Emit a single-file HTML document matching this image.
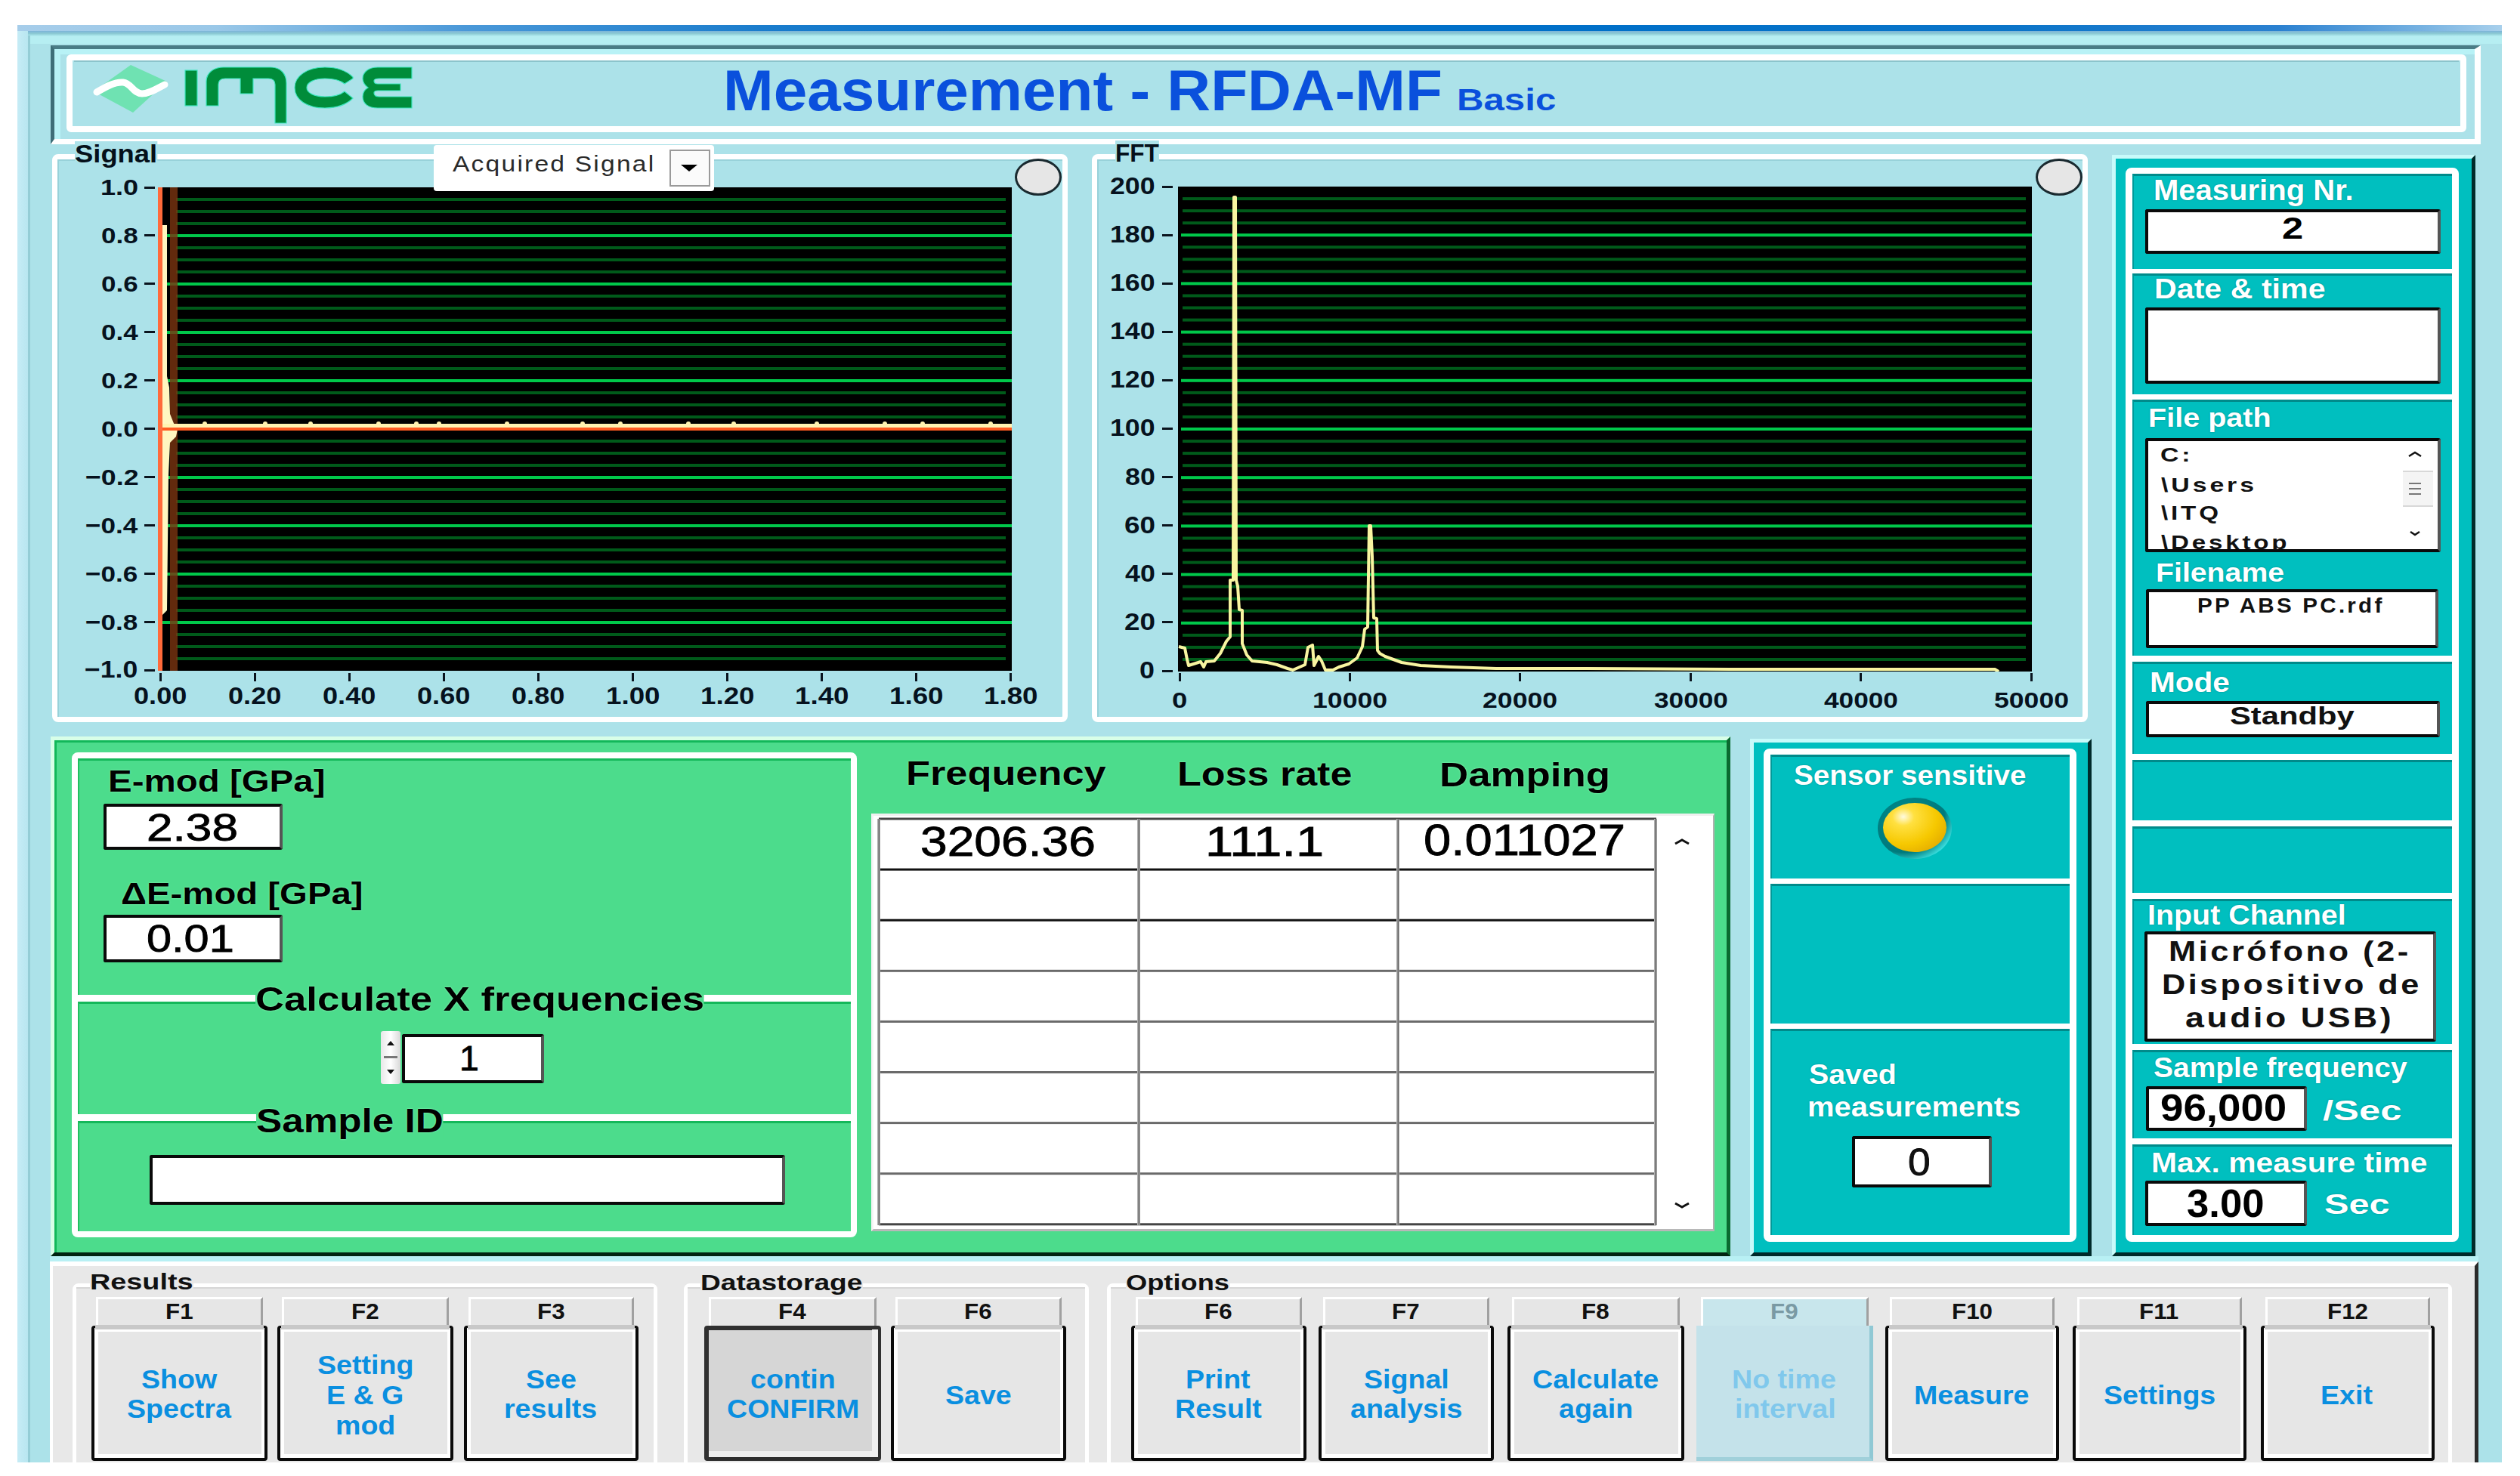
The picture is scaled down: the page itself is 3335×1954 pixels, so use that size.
<!DOCTYPE html>
<html><head><meta charset="utf-8"><style>
html,body{margin:0;padding:0;}
body{width:3335px;height:1954px;position:relative;overflow:hidden;background:#fff;font-family:"Liberation Sans",sans-serif;}
.a{position:absolute;}
.t{position:absolute;white-space:nowrap;line-height:1;transform-origin:0 0;font-family:"Liberation Sans",sans-serif;}
</style></head><body>
<div class="a" style="left:23px;top:33px;width:3288px;height:1903px;background:#ace2e9;"></div>
<div class="a" style="left:23px;top:33px;width:3288px;height:8px;background:linear-gradient(90deg,#a6cdea 0%,#9ac8e8 8%,#4a98d8 18%,#1a7ccc 30%,#0070c8 45%,#0070c8 65%,#0a74c8 80%,#2a80d0 91%,#7ab4e2 97%,#a8d0ec 100%);"></div>
<div class="a" style="left:23px;top:41px;width:3288px;height:7px;background:linear-gradient(180deg,#7cb4d8,#8ccad4 50%,#b4eef2);"></div>
<div class="a" style="left:40px;top:48px;width:3271px;height:10px;background:#b6eef2;"></div>
<div class="a" style="left:23px;top:41px;width:14px;height:1895px;background:linear-gradient(90deg,#c6ecf6,#b8e6f0);"></div>
<div class="a" style="left:37px;top:47px;width:3px;height:1889px;background:#94cdd6;"></div>
<div class="a" style="left:67px;top:60px;width:3216px;height:131px;background:#ace2e9;border-top:5px solid #4a7c86;border-left:5px solid #3e6e78;border-right:8px solid #ffffff;border-bottom:7px solid #ffffff;box-sizing:border-box;"></div>
<div class="a" style="left:72px;top:65px;width:3203px;height:7px;background:#b8f2f6;"></div>
<div class="a" style="left:72px;top:65px;width:8px;height:119px;background:#b8f2f6;"></div>
<div class="a" style="left:88px;top:72px;width:3176px;height:103px;background:#ace2e9;border:8px solid #fff;border-radius:6px;box-sizing:border-box;"></div>
<div class="a" style="left:98px;top:80px;width:3156px;height:2px;background:#8cc4cc;"></div>
<svg class="a" style="left:100px;top:70px" width="460" height="110" viewBox="100 70 460 110">
<polygon points="124,121 173,86 221,108 176,149" fill="#6fe2b2"/>
<path d="M128,122 C140,115 152,108 163,109 C174,110 176,124 188,124 C198,124 208,117 218,112" stroke="#ffffff" stroke-width="9" fill="none" stroke-linecap="round"/>
<g fill="#008c3a" stroke="#3fe6c0" stroke-width="1.2">
<rect x="245" y="93" width="16" height="47"/>
<path d="M273,140 L273,108 C273,96 283,89 296,89 L358,89 C372,89 379,98 379,110 L379,163 L364,163 L364,112 C364,106 360,104 355,104 L335,104 L335,124 L318,124 L318,104 L298,104 C292,104 289,107 289,112 L289,140 Z"/>
<path d="M467,104 L467,102 C458,93 446,89 430,89 C406,89 390,101 390,116 C390,132 406,143 430,143 C446,143 458,139 467,130 L456,121 C450,126 441,128 430,128 C416,128 406,123 406,116 C406,109 416,104 430,104 C441,104 450,106 456,111 Z"/>
<path d="M545,89 L500,89 C487,89 480,96 480,104 C480,109 483,113 487,116 C482,119 480,123 480,128 C480,137 487,143 500,143 L545,143 L545,128 L502,128 C497,128 495,126 495,123 C495,121 497,120 500,120 L530,120 L530,111 L500,111 C497,111 495,110 495,107 C495,105 497,104 502,104 L545,104 Z"/>
</g></svg>
<div class="a" style="left:69px;top:204px;width:1344px;height:752px;border:7px solid #fff;border-radius:8px;box-sizing:border-box;"></div>
<div class="a" style="left:76px;top:211px;width:1330px;height:2px;background:#98d2da;"></div>
<div class="a" style="left:76px;top:211px;width:2px;height:738px;background:#98d2da;"></div>
<div class="a" style="left:1445px;top:204px;width:1318px;height:752px;border:7px solid #fff;border-radius:8px;box-sizing:border-box;"></div>
<div class="a" style="left:1452px;top:211px;width:1304px;height:2px;background:#98d2da;"></div>
<div class="a" style="left:1452px;top:211px;width:2px;height:738px;background:#98d2da;"></div>
<svg class="a" style="left:211px;top:248px" width="1128" height="640"><rect width="1128" height="640" fill="#000"/><rect x="22" y="14.0" width="1098" height="4" fill="#005a1a"/><rect x="22" y="30.0" width="1098" height="4" fill="#005a1a"/><rect x="22" y="46.0" width="1098" height="4" fill="#005a1a"/><rect x="4" y="62.0" width="1124" height="4" fill="#00c84a"/><rect x="22" y="78.0" width="1098" height="4" fill="#005a1a"/><rect x="22" y="94.0" width="1098" height="4" fill="#005a1a"/><rect x="22" y="110.0" width="1098" height="4" fill="#005a1a"/><rect x="4" y="126.0" width="1124" height="4" fill="#00c84a"/><rect x="22" y="142.0" width="1098" height="4" fill="#005a1a"/><rect x="22" y="158.0" width="1098" height="4" fill="#005a1a"/><rect x="22" y="174.0" width="1098" height="4" fill="#005a1a"/><rect x="4" y="190.0" width="1124" height="4" fill="#00c84a"/><rect x="22" y="206.0" width="1098" height="4" fill="#005a1a"/><rect x="22" y="222.0" width="1098" height="4" fill="#005a1a"/><rect x="22" y="238.0" width="1098" height="4" fill="#005a1a"/><rect x="4" y="254.0" width="1124" height="4" fill="#00c84a"/><rect x="22" y="270.0" width="1098" height="4" fill="#005a1a"/><rect x="22" y="286.0" width="1098" height="4" fill="#005a1a"/><rect x="22" y="302.0" width="1098" height="4" fill="#005a1a"/><rect x="4" y="318.0" width="1124" height="4" fill="#00c84a"/><rect x="22" y="334.0" width="1098" height="4" fill="#005a1a"/><rect x="22" y="350.0" width="1098" height="4" fill="#005a1a"/><rect x="22" y="366.0" width="1098" height="4" fill="#005a1a"/><rect x="4" y="382.0" width="1124" height="4" fill="#00c84a"/><rect x="22" y="398.0" width="1098" height="4" fill="#005a1a"/><rect x="22" y="414.0" width="1098" height="4" fill="#005a1a"/><rect x="22" y="430.0" width="1098" height="4" fill="#005a1a"/><rect x="4" y="446.0" width="1124" height="4" fill="#00c84a"/><rect x="22" y="462.0" width="1098" height="4" fill="#005a1a"/><rect x="22" y="478.0" width="1098" height="4" fill="#005a1a"/><rect x="22" y="494.0" width="1098" height="4" fill="#005a1a"/><rect x="4" y="510.0" width="1124" height="4" fill="#00c84a"/><rect x="22" y="526.0" width="1098" height="4" fill="#005a1a"/><rect x="22" y="542.0" width="1098" height="4" fill="#005a1a"/><rect x="22" y="558.0" width="1098" height="4" fill="#005a1a"/><rect x="4" y="574.0" width="1124" height="4" fill="#00c84a"/><rect x="22" y="590.0" width="1098" height="4" fill="#005a1a"/><rect x="22" y="606.0" width="1098" height="4" fill="#005a1a"/><rect x="22" y="622.0" width="1098" height="4" fill="#005a1a"/><rect x="14" y="0" width="10" height="640" fill="#7a3410" opacity="0.8"/><path d="M4,50 L10,50 L10,250 L13,265 L14,300 L20,315 L24,320 L22,330 L14,338 L12,380 L10,560 L4,566 Z" fill="#fff6c0"/><rect x="4" y="313" width="1124" height="5" fill="#fff2b0"/><rect x="0" y="318" width="1128" height="4" fill="#ff5a20"/><circle cx="60" cy="313" r="3" fill="#fff2b0"/><circle cx="140" cy="313" r="3" fill="#fff2b0"/><circle cx="200" cy="313" r="3" fill="#fff2b0"/><circle cx="290" cy="313" r="3" fill="#fff2b0"/><circle cx="340" cy="313" r="3" fill="#fff2b0"/><circle cx="370" cy="313" r="3" fill="#fff2b0"/><circle cx="460" cy="313" r="3" fill="#fff2b0"/><circle cx="560" cy="313" r="3" fill="#fff2b0"/><circle cx="610" cy="313" r="3" fill="#fff2b0"/><circle cx="700" cy="313" r="3" fill="#fff2b0"/><circle cx="760" cy="313" r="3" fill="#fff2b0"/><circle cx="870" cy="313" r="3" fill="#fff2b0"/><circle cx="960" cy="313" r="3" fill="#fff2b0"/><circle cx="1010" cy="313" r="3" fill="#fff2b0"/><circle cx="1100" cy="313" r="3" fill="#fff2b0"/></svg>
<div class="a" style="left:209px;top:248px;width:6px;height:640px;background:#ff6a3a;"></div>
<svg class="a" style="left:1559px;top:247px" width="1130" height="642"><rect width="1130" height="642" fill="#000"/><rect x="6" y="14.1" width="1116" height="4" fill="#005a1a"/><rect x="6" y="30.1" width="1116" height="4" fill="#005a1a"/><rect x="6" y="46.2" width="1116" height="4" fill="#005a1a"/><rect x="4" y="62.2" width="1126" height="4" fill="#00c84a"/><rect x="6" y="78.2" width="1116" height="4" fill="#005a1a"/><rect x="6" y="94.3" width="1116" height="4" fill="#005a1a"/><rect x="6" y="110.4" width="1116" height="4" fill="#005a1a"/><rect x="4" y="126.4" width="1126" height="4" fill="#00c84a"/><rect x="6" y="142.5" width="1116" height="4" fill="#005a1a"/><rect x="6" y="158.5" width="1116" height="4" fill="#005a1a"/><rect x="6" y="174.6" width="1116" height="4" fill="#005a1a"/><rect x="4" y="190.6" width="1126" height="4" fill="#00c84a"/><rect x="6" y="206.7" width="1116" height="4" fill="#005a1a"/><rect x="6" y="222.7" width="1116" height="4" fill="#005a1a"/><rect x="6" y="238.8" width="1116" height="4" fill="#005a1a"/><rect x="4" y="254.8" width="1126" height="4" fill="#00c84a"/><rect x="6" y="270.9" width="1116" height="4" fill="#005a1a"/><rect x="6" y="286.9" width="1116" height="4" fill="#005a1a"/><rect x="6" y="302.9" width="1116" height="4" fill="#005a1a"/><rect x="4" y="319.0" width="1126" height="4" fill="#00c84a"/><rect x="6" y="335.1" width="1116" height="4" fill="#005a1a"/><rect x="6" y="351.1" width="1116" height="4" fill="#005a1a"/><rect x="6" y="367.2" width="1116" height="4" fill="#005a1a"/><rect x="4" y="383.2" width="1126" height="4" fill="#00c84a"/><rect x="6" y="399.2" width="1116" height="4" fill="#005a1a"/><rect x="6" y="415.3" width="1116" height="4" fill="#005a1a"/><rect x="6" y="431.4" width="1116" height="4" fill="#005a1a"/><rect x="4" y="447.4" width="1126" height="4" fill="#00c84a"/><rect x="6" y="463.5" width="1116" height="4" fill="#005a1a"/><rect x="6" y="479.5" width="1116" height="4" fill="#005a1a"/><rect x="6" y="495.6" width="1116" height="4" fill="#005a1a"/><rect x="4" y="511.6" width="1126" height="4" fill="#00c84a"/><rect x="6" y="527.6" width="1116" height="4" fill="#005a1a"/><rect x="6" y="543.7" width="1116" height="4" fill="#005a1a"/><rect x="6" y="559.8" width="1116" height="4" fill="#005a1a"/><rect x="4" y="575.8" width="1126" height="4" fill="#00c84a"/><rect x="6" y="591.9" width="1116" height="4" fill="#005a1a"/><rect x="6" y="607.9" width="1116" height="4" fill="#005a1a"/><rect x="6" y="624.0" width="1116" height="4" fill="#005a1a"/><polyline points="1,609 9,611 12,626 14,634 30,629 34,636 37,629 48,628 56,618 64,602 69,596 69,521 73,521 74,14 76,14 77,521 79,529 81,560 85,561 85,605 91,620 98,628 118,630 131,633 145,638 152,640 168,633 172,610 178,607 180,634 186,622 190,628 195,640 205,640 213,636 226,632 237,624 244,609 247,586 251,583 253,449 255,449 257,490 259,571 263,572 264,614 267,618 274,622 296,630 321,634 361,636 421,638 541,638 741,639 941,639 1081,639 1086,642" fill="none" stroke="#f8f4a0" stroke-width="4" stroke-linejoin="round"/></svg>
<div class="a" style="left:191px;top:246.5px;width:14px;height:3px;background:#0a141e"></div><div class="a" style="left:1538px;top:245.5px;width:14px;height:3px;background:#0a141e"></div><div class="a" style="left:191px;top:310.4px;width:14px;height:3px;background:#0a141e"></div><div class="a" style="left:1538px;top:309.6px;width:14px;height:3px;background:#0a141e"></div><div class="a" style="left:191px;top:374.3px;width:14px;height:3px;background:#0a141e"></div><div class="a" style="left:1538px;top:373.7px;width:14px;height:3px;background:#0a141e"></div><div class="a" style="left:191px;top:438.2px;width:14px;height:3px;background:#0a141e"></div><div class="a" style="left:1538px;top:437.8px;width:14px;height:3px;background:#0a141e"></div><div class="a" style="left:191px;top:502.1px;width:14px;height:3px;background:#0a141e"></div><div class="a" style="left:1538px;top:501.9px;width:14px;height:3px;background:#0a141e"></div><div class="a" style="left:191px;top:566.0px;width:14px;height:3px;background:#0a141e"></div><div class="a" style="left:1538px;top:566.0px;width:14px;height:3px;background:#0a141e"></div><div class="a" style="left:191px;top:629.9px;width:14px;height:3px;background:#0a141e"></div><div class="a" style="left:1538px;top:630.1px;width:14px;height:3px;background:#0a141e"></div><div class="a" style="left:191px;top:693.8px;width:14px;height:3px;background:#0a141e"></div><div class="a" style="left:1538px;top:694.2px;width:14px;height:3px;background:#0a141e"></div><div class="a" style="left:191px;top:757.7px;width:14px;height:3px;background:#0a141e"></div><div class="a" style="left:1538px;top:758.3px;width:14px;height:3px;background:#0a141e"></div><div class="a" style="left:191px;top:821.6px;width:14px;height:3px;background:#0a141e"></div><div class="a" style="left:1538px;top:822.4px;width:14px;height:3px;background:#0a141e"></div><div class="a" style="left:191px;top:885.5px;width:14px;height:3px;background:#0a141e"></div><div class="a" style="left:1538px;top:886.5px;width:14px;height:3px;background:#0a141e"></div><div class="a" style="left:210.5px;top:891px;width:3px;height:11px;background:#0a141e"></div><div class="a" style="left:335.6px;top:891px;width:3px;height:11px;background:#0a141e"></div><div class="a" style="left:460.7px;top:891px;width:3px;height:11px;background:#0a141e"></div><div class="a" style="left:585.8px;top:891px;width:3px;height:11px;background:#0a141e"></div><div class="a" style="left:710.9px;top:891px;width:3px;height:11px;background:#0a141e"></div><div class="a" style="left:836.0px;top:891px;width:3px;height:11px;background:#0a141e"></div><div class="a" style="left:961.1px;top:891px;width:3px;height:11px;background:#0a141e"></div><div class="a" style="left:1086.2px;top:891px;width:3px;height:11px;background:#0a141e"></div><div class="a" style="left:1211.3px;top:891px;width:3px;height:11px;background:#0a141e"></div><div class="a" style="left:1336.4px;top:891px;width:3px;height:11px;background:#0a141e"></div><div class="a" style="left:1559.5px;top:891px;width:3px;height:11px;background:#0a141e"></div><div class="a" style="left:1784.9px;top:891px;width:3px;height:11px;background:#0a141e"></div><div class="a" style="left:2010.3px;top:891px;width:3px;height:11px;background:#0a141e"></div><div class="a" style="left:2235.7px;top:891px;width:3px;height:11px;background:#0a141e"></div><div class="a" style="left:2461.1px;top:891px;width:3px;height:11px;background:#0a141e"></div><div class="a" style="left:2686.5px;top:891px;width:3px;height:11px;background:#0a141e"></div>
<div class="a" style="left:1343px;top:210px;width:62px;height:49px;border-radius:50%;background:#e6e6e6;border:3px solid #1a2a30;box-sizing:border-box;"></div>
<div class="a" style="left:2694px;top:210px;width:62px;height:49px;border-radius:50%;background:#e6e6e6;border:3px solid #1a2a30;box-sizing:border-box;"></div>
<div class="a" style="left:574px;top:192px;width:371px;height:61px;background:#fff;border-radius:4px;"></div>
<div class="a" style="left:886px;top:198px;width:54px;height:49px;background:#fbfbfb;border:2px solid #9a9a9a;box-sizing:border-box;"></div>
<svg class="a" style="left:900px;top:215px" width="26" height="14"><polygon points="1,3 23,3 12,12" fill="#000"/></svg>
<div class="a" style="left:2795px;top:205px;width:481px;height:1458px;background:#00bfbf;border-top:5px solid #c8fafa;border-left:5px solid #c8fafa;border-right:5px solid #002a2a;border-bottom:5px solid #002a2a;box-sizing:border-box;"></div>
<div class="a" style="left:2813px;top:222px;width:441px;height:1422px;border:9px solid #fff;border-radius:8px;box-sizing:border-box;"></div>
<div class="a" style="left:2822px;top:230px;width:423px;height:126px;background:#00bfbf;border-top:3px solid #008a8a;border-left:2px solid #009a9a;box-sizing:border-box;"></div>
<div class="a" style="left:2822px;top:362px;width:423px;height:160px;background:#00bfbf;border-top:3px solid #008a8a;border-left:2px solid #009a9a;box-sizing:border-box;"></div>
<div class="a" style="left:2822px;top:529px;width:423px;height:339px;background:#00bfbf;border-top:3px solid #008a8a;border-left:2px solid #009a9a;box-sizing:border-box;"></div>
<div class="a" style="left:2822px;top:876px;width:423px;height:122px;background:#00bfbf;border-top:3px solid #008a8a;border-left:2px solid #009a9a;box-sizing:border-box;"></div>
<div class="a" style="left:2822px;top:1006px;width:423px;height:80px;background:#00bfbf;border-top:3px solid #008a8a;border-left:2px solid #009a9a;box-sizing:border-box;"></div>
<div class="a" style="left:2822px;top:1094px;width:423px;height:88px;background:#00bfbf;border-top:3px solid #008a8a;border-left:2px solid #009a9a;box-sizing:border-box;"></div>
<div class="a" style="left:2822px;top:1190px;width:423px;height:192px;background:#00bfbf;border-top:3px solid #008a8a;border-left:2px solid #009a9a;box-sizing:border-box;"></div>
<div class="a" style="left:2822px;top:1390px;width:423px;height:117px;background:#00bfbf;border-top:3px solid #008a8a;border-left:2px solid #009a9a;box-sizing:border-box;"></div>
<div class="a" style="left:2822px;top:1515px;width:423px;height:120px;background:#00bfbf;border-top:3px solid #008a8a;border-left:2px solid #009a9a;box-sizing:border-box;"></div>
<div class="a" style="left:2813px;top:356px;width:441px;height:6px;background:#fff;"></div>
<div class="a" style="left:2813px;top:522px;width:441px;height:7px;background:#fff;"></div>
<div class="a" style="left:2813px;top:868px;width:441px;height:8px;background:#fff;"></div>
<div class="a" style="left:2813px;top:998px;width:441px;height:8px;background:#fff;"></div>
<div class="a" style="left:2813px;top:1086px;width:441px;height:8px;background:#fff;"></div>
<div class="a" style="left:2813px;top:1182px;width:441px;height:8px;background:#fff;"></div>
<div class="a" style="left:2813px;top:1382px;width:441px;height:8px;background:#fff;"></div>
<div class="a" style="left:2813px;top:1507px;width:441px;height:8px;background:#fff;"></div>
<div class="a" style="left:2839px;top:277px;width:391px;height:59px;background:#fff;border:4px solid #0a0a0a;border-right-color:#555;border-radius:3px;box-sizing:border-box;"></div>
<div class="a" style="left:2839px;top:407px;width:391px;height:101px;background:#fff;border:4px solid #0a0a0a;border-right-color:#555;border-radius:3px;box-sizing:border-box;"></div>
<div class="a" style="left:2839px;top:580px;width:391px;height:151px;background:#fff;border:4px solid #0a0a0a;border-right-color:#555;border-radius:3px;box-sizing:border-box;"></div>
<svg class="a" style="left:3180px;top:592px" width="40" height="130"><path d="M8,12 L16,7 L24,12" stroke="#111" stroke-width="2.5" fill="none"/><rect x="-14" y="32" width="56" height="46" rx="3" fill="#f4f4f4" stroke="#d8d8d8" stroke-width="2"/><path d="M8,48 H24 M8,55 H24 M8,62 H24" stroke="#777" stroke-width="2"/><path d="M10,112 L16,116 L22,112" stroke="#111" stroke-width="2.5" fill="none"/></svg>
<div class="a" style="left:2840px;top:780px;width:387px;height:78px;background:#fff;border:4px solid #0a0a0a;border-right-color:#555;border-radius:3px;box-sizing:border-box;"></div>
<div class="a" style="left:2840px;top:928px;width:389px;height:48px;background:#fff;border:4px solid #0a0a0a;border-right-color:#555;border-radius:3px;box-sizing:border-box;"></div>
<div class="a" style="left:2838px;top:1233px;width:386px;height:146px;background:#fff;border:4px solid #0a0a0a;border-right-color:#555;border-radius:3px;box-sizing:border-box;"></div>
<div class="a" style="left:2840px;top:1438px;width:213px;height:59px;background:#fff;border:4px solid #0a0a0a;border-right-color:#555;border-radius:3px;box-sizing:border-box;"></div>
<div class="a" style="left:2839px;top:1563px;width:214px;height:60px;background:#fff;border:4px solid #0a0a0a;border-right-color:#555;border-radius:3px;box-sizing:border-box;"></div>
<div class="a" style="left:67px;top:975px;width:2223px;height:688px;background:#4cdc8c;border-top:5px solid #d8ffe8;border-left:5px solid #d8ffe8;border-right:5px solid #0a6a30;border-bottom:5px solid #002410;box-sizing:border-box;"></div>
<div class="a" style="left:72px;top:980px;width:2213px;height:3px;background:#12b85a;"></div>
<div class="a" style="left:72px;top:980px;width:3px;height:678px;background:#12b85a;"></div>
<div class="a" style="left:95px;top:996px;width:1039px;height:642px;border:8px solid #fff;border-radius:8px;box-sizing:border-box;"></div>
<div class="a" style="left:103px;top:1004px;width:1023px;height:313px;background:#4cdc8c;border-top:3px solid #14b85a;border-left:2px solid #20c060;box-sizing:border-box;"></div>
<div class="a" style="left:103px;top:1326px;width:1023px;height:149px;background:#4cdc8c;border-top:3px solid #14b85a;border-left:2px solid #20c060;box-sizing:border-box;"></div>
<div class="a" style="left:103px;top:1484px;width:1023px;height:146px;background:#4cdc8c;border-top:3px solid #14b85a;border-left:2px solid #20c060;box-sizing:border-box;"></div>
<div class="a" style="left:95px;top:1317px;width:1039px;height:9px;background:#fff;"></div>
<div class="a" style="left:95px;top:1475px;width:1039px;height:9px;background:#fff;"></div>
<div class="a" style="left:137px;top:1064px;width:237px;height:61px;background:#fff;border:4px solid #0a0a0a;border-right-color:#555;border-radius:3px;box-sizing:border-box;"></div>
<div class="a" style="left:137px;top:1211px;width:237px;height:63px;background:#fff;border:4px solid #0a0a0a;border-right-color:#555;border-radius:3px;box-sizing:border-box;"></div>
<div class="a" style="left:532px;top:1369px;width:188px;height:65px;background:#fff;border:4px solid #0a0a0a;border-right-color:#555;border-radius:3px;box-sizing:border-box;"></div>
<div class="a" style="left:198px;top:1529px;width:841px;height:66px;background:#fff;border:4px solid #0a0a0a;border-right-color:#555;border-radius:3px;box-sizing:border-box;"></div>
<div class="a" style="left:504px;top:1365px;width:26px;height:70px;background:linear-gradient(90deg,#e8e8e8,#ffffff,#d8d8d8);border-radius:3px"></div>
<svg class="a" style="left:504px;top:1365px" width="26" height="70"><path d="M8,19 L13,13 L18,19 Z" fill="#111"/><path d="M8,51 L13,57 L18,51 Z" fill="#111"/><rect x="4" y="33" width="18" height="3" fill="#777"/></svg>
<div class="a" style="left:1153px;top:1077px;width:1116px;height:553px;background:#fff;border-top:3px solid #f0f0f0;border-left:3px solid #f4f4f4;border-right:2px solid #b0b0b0;border-bottom:3px solid #b8b8b8;box-sizing:border-box;"></div>
<svg class="a" style="left:1153px;top:1077px" width="1116" height="553"><rect x="10" y="5.5" width="1029" height="3" fill="#444"/><rect x="10" y="72.6" width="1029" height="3" fill="#111"/><rect x="10" y="139.7" width="1029" height="3" fill="#111"/><rect x="10" y="206.8" width="1029" height="3" fill="#6a6a6a"/><rect x="10" y="273.9" width="1029" height="3" fill="#6a6a6a"/><rect x="10" y="341.0" width="1029" height="3" fill="#6a6a6a"/><rect x="10" y="408.1" width="1029" height="3" fill="#6a6a6a"/><rect x="10" y="475.2" width="1029" height="3" fill="#6a6a6a"/><rect x="10" y="542.3" width="1029" height="3" fill="#444"/><rect x="8" y="7" width="4" height="538" fill="#b0b0b0"/><rect x="9.5" y="7" width="1.6" height="538" fill="#666"/><rect x="352" y="7" width="4" height="538" fill="#b0b0b0"/><rect x="353.5" y="7" width="1.6" height="538" fill="#666"/><rect x="695" y="7" width="4" height="538" fill="#b0b0b0"/><rect x="696.5" y="7" width="1.6" height="538" fill="#666"/><rect x="1036" y="7" width="4" height="538" fill="#b0b0b0"/><rect x="1037.5" y="7" width="1.6" height="538" fill="#666"/><path d="M1064,40 L1073,35 L1082,40" stroke="#111" stroke-width="3" fill="none"/><path d="M1064,516 L1073,521 L1082,516" stroke="#111" stroke-width="3" fill="none"/></svg>
<div class="a" style="left:2316px;top:978px;width:452px;height:685px;background:#00bfbf;border-top:5px solid #c8fafa;border-left:5px solid #c8fafa;border-right:5px solid #002a2a;border-bottom:5px solid #002a2a;box-sizing:border-box;"></div>
<div class="a" style="left:2334px;top:991px;width:414px;height:653px;border:9px solid #fff;border-radius:8px;box-sizing:border-box;"></div>
<div class="a" style="left:2343px;top:999px;width:396px;height:164px;background:#00bfbf;border-top:3px solid #008a8a;border-left:2px solid #009a9a;box-sizing:border-box;"></div>
<div class="a" style="left:2343px;top:1170px;width:396px;height:185px;background:#00bfbf;border-top:3px solid #008a8a;border-left:2px solid #009a9a;box-sizing:border-box;"></div>
<div class="a" style="left:2343px;top:1362px;width:396px;height:273px;background:#00bfbf;border-top:3px solid #008a8a;border-left:2px solid #009a9a;box-sizing:border-box;"></div>
<div class="a" style="left:2334px;top:1163px;width:414px;height:7px;background:#fff;"></div>
<div class="a" style="left:2334px;top:1355px;width:414px;height:7px;background:#fff;"></div>
<div class="a" style="left:2485px;top:1056px;width:98px;height:81px;border-radius:50%;background:radial-gradient(ellipse at 35% 30%,#00888a 0%,#007a7c 60%,#40e8e8 80%,#00bfbf 100%);"></div>
<div class="a" style="left:2492px;top:1063px;width:84px;height:65px;border-radius:50%;background:radial-gradient(ellipse at 32% 28%,#fffbe0 0%,#ffe040 18%,#f6c800 55%,#d89a00 100%);"></div>
<div class="a" style="left:2451px;top:1504px;width:185px;height:68px;background:#fff;border:4px solid #0a0a0a;border-right-color:#555;border-radius:3px;box-sizing:border-box;"></div>
<div class="a" style="left:2290px;top:975px;width:26px;height:688px;background:#ace2e9;"></div>
<div class="a" style="left:2768px;top:1663px;width:27px;height:7px;background:#ace2e9;"></div>
<div class="a" style="left:66px;top:1670px;width:3214px;height:266px;background:#e8e8e8;border-top:6px solid #ffffff;border-left:4px solid #ffffff;border-right:5px solid #2a2a2a;box-sizing:border-box;"></div>
<div class="a" style="left:66px;top:1663px;width:3214px;height:7px;background:#b8f0f4;"></div>
<div class="a" style="left:96px;top:1699px;width:774px;height:261px;border:5px solid #fff;border-radius:8px;box-sizing:border-box;"></div>
<div class="a" style="left:101px;top:1704px;width:764px;height:2px;background:#d6d6d6;"></div>
<div class="a" style="left:905px;top:1699px;width:536px;height:261px;border:5px solid #fff;border-radius:8px;box-sizing:border-box;"></div>
<div class="a" style="left:910px;top:1704px;width:526px;height:2px;background:#d6d6d6;"></div>
<div class="a" style="left:1465px;top:1699px;width:1780px;height:261px;border:5px solid #fff;border-radius:8px;box-sizing:border-box;"></div>
<div class="a" style="left:1470px;top:1704px;width:1770px;height:2px;background:#d6d6d6;"></div>
<div class="a" style="left:23px;top:1936px;width:3312px;height:18px;background:#fff;"></div>
<div class="a" style="left:127px;top:1717px;width:221px;height:39px;background:#e6e6e6;border-top:3px solid #fff;border-left:3px solid #fff;border-right:3px solid #a0a0a0;box-sizing:border-box;"></div>
<div class="a" style="left:121px;top:1755px;width:233px;height:179px;background:#e6e6e6;border:4px solid #0a0a0a;border-top-width:3px;border-radius:4px;box-sizing:border-box;"></div>
<div class="a" style="left:125px;top:1758px;width:225px;height:172px;border-top:5px solid #fff;border-left:5px solid #fff;border-right:4px solid #ffffff;border-bottom:5px solid #fff;box-sizing:border-box;"></div>
<div class="a" style="left:126px;top:1754px;width:223px;height:6px;background:#c8c8c8;"></div>
<div class="a" style="left:373px;top:1717px;width:221px;height:39px;background:#e6e6e6;border-top:3px solid #fff;border-left:3px solid #fff;border-right:3px solid #a0a0a0;box-sizing:border-box;"></div>
<div class="a" style="left:367px;top:1755px;width:233px;height:179px;background:#e6e6e6;border:4px solid #0a0a0a;border-top-width:3px;border-radius:4px;box-sizing:border-box;"></div>
<div class="a" style="left:371px;top:1758px;width:225px;height:172px;border-top:5px solid #fff;border-left:5px solid #fff;border-right:4px solid #ffffff;border-bottom:5px solid #fff;box-sizing:border-box;"></div>
<div class="a" style="left:372px;top:1754px;width:223px;height:6px;background:#c8c8c8;"></div>
<div class="a" style="left:620px;top:1717px;width:219px;height:39px;background:#e6e6e6;border-top:3px solid #fff;border-left:3px solid #fff;border-right:3px solid #a0a0a0;box-sizing:border-box;"></div>
<div class="a" style="left:614px;top:1755px;width:231px;height:179px;background:#e6e6e6;border:4px solid #0a0a0a;border-top-width:3px;border-radius:4px;box-sizing:border-box;"></div>
<div class="a" style="left:618px;top:1758px;width:223px;height:172px;border-top:5px solid #fff;border-left:5px solid #fff;border-right:4px solid #ffffff;border-bottom:5px solid #fff;box-sizing:border-box;"></div>
<div class="a" style="left:619px;top:1754px;width:221px;height:6px;background:#c8c8c8;"></div>
<div class="a" style="left:938px;top:1717px;width:222px;height:39px;background:#e6e6e6;border-top:3px solid #fff;border-left:3px solid #fff;border-right:3px solid #a0a0a0;box-sizing:border-box;"></div>
<div class="a" style="left:932px;top:1755px;width:234px;height:179px;background:#d6d6d6;border:6px solid #303030;border-right-width:4px;border-radius:4px;box-sizing:border-box;"></div>
<div class="a" style="left:1154px;top:1760px;width:8px;height:169px;background:#f0f0f0;"></div>
<div class="a" style="left:938px;top:1921px;width:224px;height:8px;background:#f0f0f0;"></div>
<div class="a" style="left:1185px;top:1717px;width:220px;height:39px;background:#e6e6e6;border-top:3px solid #fff;border-left:3px solid #fff;border-right:3px solid #a0a0a0;box-sizing:border-box;"></div>
<div class="a" style="left:1179px;top:1755px;width:232px;height:179px;background:#e6e6e6;border:4px solid #0a0a0a;border-top-width:3px;border-radius:4px;box-sizing:border-box;"></div>
<div class="a" style="left:1183px;top:1758px;width:224px;height:172px;border-top:5px solid #fff;border-left:5px solid #fff;border-right:4px solid #ffffff;border-bottom:5px solid #fff;box-sizing:border-box;"></div>
<div class="a" style="left:1184px;top:1754px;width:222px;height:6px;background:#c8c8c8;"></div>
<div class="a" style="left:1503px;top:1717px;width:220px;height:39px;background:#e6e6e6;border-top:3px solid #fff;border-left:3px solid #fff;border-right:3px solid #a0a0a0;box-sizing:border-box;"></div>
<div class="a" style="left:1497px;top:1755px;width:232px;height:179px;background:#e6e6e6;border:4px solid #0a0a0a;border-top-width:3px;border-radius:4px;box-sizing:border-box;"></div>
<div class="a" style="left:1501px;top:1758px;width:224px;height:172px;border-top:5px solid #fff;border-left:5px solid #fff;border-right:4px solid #ffffff;border-bottom:5px solid #fff;box-sizing:border-box;"></div>
<div class="a" style="left:1502px;top:1754px;width:222px;height:6px;background:#c8c8c8;"></div>
<div class="a" style="left:1751px;top:1717px;width:220px;height:39px;background:#e6e6e6;border-top:3px solid #fff;border-left:3px solid #fff;border-right:3px solid #a0a0a0;box-sizing:border-box;"></div>
<div class="a" style="left:1745px;top:1755px;width:232px;height:179px;background:#e6e6e6;border:4px solid #0a0a0a;border-top-width:3px;border-radius:4px;box-sizing:border-box;"></div>
<div class="a" style="left:1749px;top:1758px;width:224px;height:172px;border-top:5px solid #fff;border-left:5px solid #fff;border-right:4px solid #ffffff;border-bottom:5px solid #fff;box-sizing:border-box;"></div>
<div class="a" style="left:1750px;top:1754px;width:222px;height:6px;background:#c8c8c8;"></div>
<div class="a" style="left:2001px;top:1717px;width:222px;height:39px;background:#e6e6e6;border-top:3px solid #fff;border-left:3px solid #fff;border-right:3px solid #a0a0a0;box-sizing:border-box;"></div>
<div class="a" style="left:1995px;top:1755px;width:234px;height:179px;background:#e6e6e6;border:4px solid #0a0a0a;border-top-width:3px;border-radius:4px;box-sizing:border-box;"></div>
<div class="a" style="left:1999px;top:1758px;width:226px;height:172px;border-top:5px solid #fff;border-left:5px solid #fff;border-right:4px solid #ffffff;border-bottom:5px solid #fff;box-sizing:border-box;"></div>
<div class="a" style="left:2000px;top:1754px;width:224px;height:6px;background:#c8c8c8;"></div>
<div class="a" style="left:2251px;top:1717px;width:222px;height:39px;background:#c8e6ec;border-top:3px solid #fff;border-left:3px solid #fff;border-right:3px solid #a0a0a0;box-sizing:border-box;"></div>
<div class="a" style="left:2245px;top:1755px;width:234px;height:179px;background:#c4e2ea;border-right:5px solid #90c8d4;border-bottom:5px solid #a0d0da;box-sizing:border-box;"></div>
<div class="a" style="left:2501px;top:1717px;width:218px;height:39px;background:#e6e6e6;border-top:3px solid #fff;border-left:3px solid #fff;border-right:3px solid #a0a0a0;box-sizing:border-box;"></div>
<div class="a" style="left:2495px;top:1755px;width:230px;height:179px;background:#e6e6e6;border:4px solid #0a0a0a;border-top-width:3px;border-radius:4px;box-sizing:border-box;"></div>
<div class="a" style="left:2499px;top:1758px;width:222px;height:172px;border-top:5px solid #fff;border-left:5px solid #fff;border-right:4px solid #ffffff;border-bottom:5px solid #fff;box-sizing:border-box;"></div>
<div class="a" style="left:2500px;top:1754px;width:220px;height:6px;background:#c8c8c8;"></div>
<div class="a" style="left:2749px;top:1717px;width:218px;height:39px;background:#e6e6e6;border-top:3px solid #fff;border-left:3px solid #fff;border-right:3px solid #a0a0a0;box-sizing:border-box;"></div>
<div class="a" style="left:2743px;top:1755px;width:230px;height:179px;background:#e6e6e6;border:4px solid #0a0a0a;border-top-width:3px;border-radius:4px;box-sizing:border-box;"></div>
<div class="a" style="left:2747px;top:1758px;width:222px;height:172px;border-top:5px solid #fff;border-left:5px solid #fff;border-right:4px solid #ffffff;border-bottom:5px solid #fff;box-sizing:border-box;"></div>
<div class="a" style="left:2748px;top:1754px;width:220px;height:6px;background:#c8c8c8;"></div>
<div class="a" style="left:2998px;top:1717px;width:218px;height:39px;background:#e6e6e6;border-top:3px solid #fff;border-left:3px solid #fff;border-right:3px solid #a0a0a0;box-sizing:border-box;"></div>
<div class="a" style="left:2992px;top:1755px;width:230px;height:179px;background:#e6e6e6;border:4px solid #0a0a0a;border-top-width:3px;border-radius:4px;box-sizing:border-box;"></div>
<div class="a" style="left:2996px;top:1758px;width:222px;height:172px;border-top:5px solid #fff;border-left:5px solid #fff;border-right:4px solid #ffffff;border-bottom:5px solid #fff;box-sizing:border-box;"></div>
<div class="a" style="left:2997px;top:1754px;width:220px;height:6px;background:#c8c8c8;"></div>
<div class="t" style="left:956.7px;top:83.3px;font-size:75.4px;font-weight:bold;color:#0a50dc;transform:scaleX(1.062);letter-spacing:0px;">Measurement - RFDA-MF</div>
<div class="t" style="left:1928.4px;top:111.7px;font-size:40.6px;font-weight:bold;color:#0a50dc;transform:scaleX(1.212);letter-spacing:0px;">Basic</div>
<div class="t" style="left:98.9px;top:186.8px;font-size:33.3px;font-weight:bold;color:#05101a;transform:scaleX(1.093);letter-spacing:0px;background:#ace2e9;">Signal</div>
<div class="t" style="left:599.0px;top:201.3px;font-size:30.4px;font-weight:normal;color:#2a2a2a;transform:scaleX(1.105);letter-spacing:2px;">Acquired Signal</div>
<div class="t" style="left:132.5px;top:233.5px;font-size:29.0px;font-weight:normal;color:#06121e;transform:scaleX(1.243);letter-spacing:0px;font-weight:600;">1.0</div>
<div class="t" style="left:133.8px;top:296.3px;font-size:30.4px;font-weight:normal;color:#06121e;transform:scaleX(1.150);letter-spacing:0px;font-weight:600;">0.8</div>
<div class="t" style="left:133.8px;top:360.3px;font-size:30.4px;font-weight:normal;color:#06121e;transform:scaleX(1.150);letter-spacing:0px;font-weight:600;">0.6</div>
<div class="t" style="left:133.8px;top:424.3px;font-size:30.4px;font-weight:normal;color:#06121e;transform:scaleX(1.150);letter-spacing:0px;font-weight:600;">0.4</div>
<div class="t" style="left:133.8px;top:488.3px;font-size:30.4px;font-weight:normal;color:#06121e;transform:scaleX(1.150);letter-spacing:0px;font-weight:600;">0.2</div>
<div class="t" style="left:133.8px;top:552.3px;font-size:30.4px;font-weight:normal;color:#06121e;transform:scaleX(1.150);letter-spacing:0px;font-weight:600;">0.0</div>
<div class="t" style="left:112.8px;top:616.3px;font-size:30.4px;font-weight:normal;color:#06121e;transform:scaleX(1.175);letter-spacing:0px;font-weight:600;">−0.2</div>
<div class="t" style="left:112.8px;top:680.3px;font-size:30.4px;font-weight:normal;color:#06121e;transform:scaleX(1.155);letter-spacing:0px;font-weight:600;">−0.4</div>
<div class="t" style="left:112.8px;top:744.3px;font-size:30.4px;font-weight:normal;color:#06121e;transform:scaleX(1.155);letter-spacing:0px;font-weight:600;">−0.6</div>
<div class="t" style="left:112.8px;top:808.3px;font-size:30.4px;font-weight:normal;color:#06121e;transform:scaleX(1.155);letter-spacing:0px;font-weight:600;">−0.8</div>
<div class="t" style="left:111.8px;top:871.1px;font-size:31.9px;font-weight:normal;color:#06121e;transform:scaleX(1.117);letter-spacing:0px;font-weight:600;">−1.0</div>
<div class="t" style="left:176.9px;top:906.1px;font-size:31.9px;font-weight:normal;color:#06121e;transform:scaleX(1.133);letter-spacing:0px;font-weight:600;">0.00</div>
<div class="t" style="left:301.9px;top:906.1px;font-size:31.9px;font-weight:normal;color:#06121e;transform:scaleX(1.133);letter-spacing:0px;font-weight:600;">0.20</div>
<div class="t" style="left:426.9px;top:906.1px;font-size:31.9px;font-weight:normal;color:#06121e;transform:scaleX(1.133);letter-spacing:0px;font-weight:600;">0.40</div>
<div class="t" style="left:551.9px;top:906.1px;font-size:31.9px;font-weight:normal;color:#06121e;transform:scaleX(1.133);letter-spacing:0px;font-weight:600;">0.60</div>
<div class="t" style="left:676.9px;top:906.1px;font-size:31.9px;font-weight:normal;color:#06121e;transform:scaleX(1.133);letter-spacing:0px;font-weight:600;">0.80</div>
<div class="t" style="left:801.7px;top:906.1px;font-size:31.9px;font-weight:normal;color:#06121e;transform:scaleX(1.153);letter-spacing:0px;font-weight:600;">1.00</div>
<div class="t" style="left:926.7px;top:906.1px;font-size:31.9px;font-weight:normal;color:#06121e;transform:scaleX(1.153);letter-spacing:0px;font-weight:600;">1.20</div>
<div class="t" style="left:1051.7px;top:906.1px;font-size:31.9px;font-weight:normal;color:#06121e;transform:scaleX(1.153);letter-spacing:0px;font-weight:600;">1.40</div>
<div class="t" style="left:1176.7px;top:906.1px;font-size:31.9px;font-weight:normal;color:#06121e;transform:scaleX(1.153);letter-spacing:0px;font-weight:600;">1.60</div>
<div class="t" style="left:1301.7px;top:906.1px;font-size:31.9px;font-weight:normal;color:#06121e;transform:scaleX(1.153);letter-spacing:0px;font-weight:600;">1.80</div>
<div class="t" style="left:1476.1px;top:185.8px;font-size:33.3px;font-weight:bold;color:#05101a;transform:scaleX(0.949);letter-spacing:0px;background:#ace2e9;">FFT</div>
<div class="t" style="left:1468.8px;top:231.1px;font-size:31.9px;font-weight:normal;color:#06121e;transform:scaleX(1.120);letter-spacing:0px;font-weight:600;">200</div>
<div class="t" style="left:1468.8px;top:295.1px;font-size:31.9px;font-weight:normal;color:#06121e;transform:scaleX(1.120);letter-spacing:0px;font-weight:600;">180</div>
<div class="t" style="left:1468.8px;top:359.1px;font-size:31.9px;font-weight:normal;color:#06121e;transform:scaleX(1.120);letter-spacing:0px;font-weight:600;">160</div>
<div class="t" style="left:1468.8px;top:423.1px;font-size:31.9px;font-weight:normal;color:#06121e;transform:scaleX(1.120);letter-spacing:0px;font-weight:600;">140</div>
<div class="t" style="left:1468.8px;top:487.1px;font-size:31.9px;font-weight:normal;color:#06121e;transform:scaleX(1.120);letter-spacing:0px;font-weight:600;">120</div>
<div class="t" style="left:1468.8px;top:551.1px;font-size:31.9px;font-weight:normal;color:#06121e;transform:scaleX(1.120);letter-spacing:0px;font-weight:600;">100</div>
<div class="t" style="left:1488.9px;top:616.1px;font-size:31.9px;font-weight:normal;color:#06121e;transform:scaleX(1.121);letter-spacing:0px;font-weight:600;">80</div>
<div class="t" style="left:1487.7px;top:680.1px;font-size:31.9px;font-weight:normal;color:#06121e;transform:scaleX(1.156);letter-spacing:0px;font-weight:600;">60</div>
<div class="t" style="left:1488.9px;top:744.1px;font-size:31.9px;font-weight:normal;color:#06121e;transform:scaleX(1.121);letter-spacing:0px;font-weight:600;">40</div>
<div class="t" style="left:1487.7px;top:808.1px;font-size:31.9px;font-weight:normal;color:#06121e;transform:scaleX(1.156);letter-spacing:0px;font-weight:600;">20</div>
<div class="t" style="left:1507.9px;top:872.1px;font-size:31.9px;font-weight:normal;color:#06121e;transform:scaleX(1.125);letter-spacing:0px;font-weight:600;">0</div>
<div class="t" style="left:1550.8px;top:911.3px;font-size:30.4px;font-weight:normal;color:#06121e;transform:scaleX(1.200);letter-spacing:0px;font-weight:600;">0</div>
<div class="t" style="left:1736.7px;top:911.3px;font-size:30.4px;font-weight:normal;color:#06121e;transform:scaleX(1.173);letter-spacing:0px;font-weight:600;">10000</div>
<div class="t" style="left:1961.7px;top:911.3px;font-size:30.4px;font-weight:normal;color:#06121e;transform:scaleX(1.173);letter-spacing:0px;font-weight:600;">20000</div>
<div class="t" style="left:2188.8px;top:911.3px;font-size:30.4px;font-weight:normal;color:#06121e;transform:scaleX(1.159);letter-spacing:0px;font-weight:600;">30000</div>
<div class="t" style="left:2413.8px;top:911.3px;font-size:30.4px;font-weight:normal;color:#06121e;transform:scaleX(1.159);letter-spacing:0px;font-weight:600;">40000</div>
<div class="t" style="left:2638.8px;top:911.3px;font-size:30.4px;font-weight:normal;color:#06121e;transform:scaleX(1.171);letter-spacing:0px;font-weight:600;">50000</div>
<div class="t" style="left:2849.9px;top:231.9px;font-size:39.1px;font-weight:bold;color:#ffffff;transform:scaleX(1.024);letter-spacing:0px;text-shadow:0 0 2px #008a8a;">Measuring Nr.</div>
<div class="t" style="left:3019.8px;top:281.7px;font-size:40.6px;font-weight:bold;color:#000000;transform:scaleX(1.250);letter-spacing:0px;">2</div>
<div class="t" style="left:2850.7px;top:365.4px;font-size:36.2px;font-weight:bold;color:#ffffff;transform:scaleX(1.138);letter-spacing:0px;text-shadow:0 0 2px #008a8a;">Date &amp; time</div>
<div class="t" style="left:2842.7px;top:535.6px;font-size:34.8px;font-weight:bold;color:#ffffff;transform:scaleX(1.137);letter-spacing:0px;text-shadow:0 0 2px #008a8a;">File path</div>
<div class="t" style="left:2858.7px;top:589.0px;font-size:26.1px;font-weight:bold;color:#111;transform:scaleX(1.296);letter-spacing:3px;">C:</div>
<div class="t" style="left:2860.0px;top:629.0px;font-size:26.1px;font-weight:bold;color:#111;transform:scaleX(1.298);letter-spacing:3px;">\Users</div>
<div class="t" style="left:2860.0px;top:666.0px;font-size:26.1px;font-weight:bold;color:#111;transform:scaleX(1.271);letter-spacing:3px;">\ITQ</div>
<div class="a" style="left:2850px;top:700px;width:250px;height:28px;overflow:hidden"><div class="a" style="left:-2850px;top:-700px;width:3335px;height:1954px"><div class="t" style="left:2860.0px;top:705.0px;font-size:26.1px;font-weight:bold;color:#111;transform:scaleX(1.269);letter-spacing:3px;">\Desktop</div></div></div>
<div class="t" style="left:2852.7px;top:740.6px;font-size:34.8px;font-weight:bold;color:#ffffff;transform:scaleX(1.128);letter-spacing:0px;text-shadow:0 0 2px #008a8a;">Filename</div>
<div class="t" style="left:2907.8px;top:787.7px;font-size:27.5px;font-weight:bold;color:#111;transform:scaleX(1.076);letter-spacing:3px;">PP ABS PC.rdf</div>
<div class="t" style="left:2844.8px;top:886.4px;font-size:36.2px;font-weight:bold;color:#ffffff;transform:scaleX(1.121);letter-spacing:0px;text-shadow:0 0 2px #008a8a;">Mode</div>
<div class="t" style="left:2950.7px;top:930.8px;font-size:33.3px;font-weight:bold;color:#111;transform:scaleX(1.254);letter-spacing:0px;">Standby</div>
<div class="t" style="left:2841.8px;top:1194.4px;font-size:36.2px;font-weight:bold;color:#ffffff;transform:scaleX(1.089);letter-spacing:0px;text-shadow:0 0 2px #008a8a;">Input Channel</div>
<div class="t" style="left:2869.7px;top:1241.2px;font-size:37.7px;font-weight:bold;color:#111;transform:scaleX(1.155);letter-spacing:3px;">Micrófono (2-</div>
<div class="t" style="left:2860.7px;top:1285.2px;font-size:37.7px;font-weight:bold;color:#111;transform:scaleX(1.147);letter-spacing:3px;">Dispositivo de</div>
<div class="t" style="left:2891.8px;top:1329.2px;font-size:37.7px;font-weight:bold;color:#111;transform:scaleX(1.185);letter-spacing:3px;">audio USB)</div>
<div class="t" style="left:2850.0px;top:1395.2px;font-size:37.7px;font-weight:bold;color:#ffffff;transform:scaleX(1.034);letter-spacing:0px;text-shadow:0 0 2px #008a8a;">Sample frequency</div>
<div class="t" style="left:2858.8px;top:1442.4px;font-size:49.3px;font-weight:bold;color:#000000;transform:scaleX(1.109);letter-spacing:0px;">96,000</div>
<div class="t" style="left:3073.6px;top:1453.4px;font-size:36.2px;font-weight:bold;color:#ffffff;transform:scaleX(1.403);letter-spacing:0px;text-shadow:0 0 2px #008a8a;">/Sec</div>
<div class="t" style="left:2846.8px;top:1521.2px;font-size:37.7px;font-weight:bold;color:#ffffff;transform:scaleX(1.084);letter-spacing:0px;text-shadow:0 0 2px #008a8a;">Max. measure time</div>
<div class="t" style="left:2894.0px;top:1566.9px;font-size:52.2px;font-weight:bold;color:#000000;transform:scaleX(1.010);letter-spacing:0px;">3.00</div>
<div class="t" style="left:3075.7px;top:1576.2px;font-size:37.7px;font-weight:bold;color:#ffffff;transform:scaleX(1.292);letter-spacing:0px;text-shadow:0 0 2px #008a8a;">Sec</div>
<div class="t" style="left:2374.0px;top:1008.2px;font-size:37.7px;font-weight:bold;color:#ffffff;transform:scaleX(1.027);letter-spacing:0px;text-shadow:0 0 2px #008a8a;">Sensor sensitive</div>
<div class="t" style="left:2393.9px;top:1405.4px;font-size:36.2px;font-weight:bold;color:#ffffff;transform:scaleX(1.087);letter-spacing:0px;text-shadow:0 0 2px #008a8a;">Saved</div>
<div class="t" style="left:2391.8px;top:1447.2px;font-size:37.7px;font-weight:bold;color:#ffffff;transform:scaleX(1.061);letter-spacing:0px;text-shadow:0 0 2px #008a8a;">measurements</div>
<div class="t" style="left:2524.8px;top:1514.4px;font-size:49.3px;font-weight:normal;color:#111;transform:scaleX(1.083);letter-spacing:0px;-webkit-text-stroke:0.8px #000;">0</div>
<div class="t" style="left:142.5px;top:1013.7px;font-size:40.6px;font-weight:bold;color:#000000;transform:scaleX(1.170);letter-spacing:0px;text-shadow:0 0 2px #9affc0;">E-mod [GPa]</div>
<div class="t" style="left:193.5px;top:1071.4px;font-size:49.3px;font-weight:normal;color:#000000;transform:scaleX(1.261);letter-spacing:0px;-webkit-text-stroke:0.8px #000;">2.38</div>
<div class="t" style="left:159.7px;top:1162.7px;font-size:40.6px;font-weight:bold;color:#000000;transform:scaleX(1.166);letter-spacing:0px;text-shadow:0 0 2px #9affc0;">ΔE-mod [GPa]</div>
<div class="t" style="left:193.6px;top:1218.4px;font-size:49.3px;font-weight:normal;color:#000000;transform:scaleX(1.207);letter-spacing:0px;-webkit-text-stroke:0.8px #000;">0.01</div>
<div class="t" style="left:337.7px;top:1301.0px;font-size:44.9px;font-weight:bold;color:#000000;transform:scaleX(1.173);letter-spacing:0px;text-shadow:0 0 2px #9affc0;background:#4cdc8c;">Calculate X frequencies</div>
<div class="t" style="left:608.0px;top:1377.8px;font-size:46.4px;font-weight:normal;color:#000000;transform:scaleX(1.000);letter-spacing:0px;-webkit-text-stroke:0.8px #000;">1</div>
<div class="t" style="left:338.8px;top:1463.3px;font-size:43.5px;font-weight:bold;color:#000000;transform:scaleX(1.178);letter-spacing:0px;text-shadow:0 0 2px #9affc0;background:#4cdc8c;">Sample ID</div>
<div class="t" style="left:1199.4px;top:1003.3px;font-size:43.5px;font-weight:bold;color:#000000;transform:scaleX(1.203);letter-spacing:0px;text-shadow:0 0 2px #9affc0;">Frequency</div>
<div class="t" style="left:1558.4px;top:1004.3px;font-size:43.5px;font-weight:bold;color:#000000;transform:scaleX(1.196);letter-spacing:0px;text-shadow:0 0 2px #9affc0;">Loss rate</div>
<div class="t" style="left:1904.5px;top:1004.0px;font-size:44.9px;font-weight:bold;color:#000000;transform:scaleX(1.177);letter-spacing:0px;text-shadow:0 0 2px #9affc0;">Damping</div>
<div class="t" style="left:1217.7px;top:1086.5px;font-size:55.1px;font-weight:normal;color:#000000;transform:scaleX(1.164);letter-spacing:0px;-webkit-text-stroke:0.8px #000;">3206.36</div>
<div class="t" style="left:1595.2px;top:1086.5px;font-size:55.1px;font-weight:normal;color:#000000;transform:scaleX(1.211);letter-spacing:0px;-webkit-text-stroke:0.8px #000;">111.1</div>
<div class="t" style="left:1883.7px;top:1085.2px;font-size:56.5px;font-weight:normal;color:#000000;transform:scaleX(1.154);letter-spacing:0px;-webkit-text-stroke:0.8px #000;">0.011027</div>
<div class="t" style="left:119.4px;top:1682.5px;font-size:29.0px;font-weight:bold;color:#111;transform:scaleX(1.304);letter-spacing:0px;background:#e8e8e8;">Results</div>
<div class="t" style="left:927.4px;top:1683.5px;font-size:29.0px;font-weight:bold;color:#111;transform:scaleX(1.279);letter-spacing:0px;background:#e8e8e8;">Datastorage</div>
<div class="t" style="left:1489.8px;top:1683.5px;font-size:29.0px;font-weight:bold;color:#111;transform:scaleX(1.250);letter-spacing:0px;background:#e8e8e8;">Options</div>
<div class="t" style="left:218.6px;top:1721.5px;font-size:29.0px;font-weight:bold;color:#111;transform:scaleX(1.080);letter-spacing:0px;">F1</div>
<div class="t" style="left:186.7px;top:1808.6px;font-size:34.8px;font-weight:bold;color:#0a8fe0;transform:scaleX(1.080);letter-spacing:0px;">Show</div>
<div class="t" style="left:167.8px;top:1847.6px;font-size:34.8px;font-weight:bold;color:#0a8fe0;transform:scaleX(1.080);letter-spacing:0px;">Spectra</div>
<div class="t" style="left:464.6px;top:1721.5px;font-size:29.0px;font-weight:bold;color:#111;transform:scaleX(1.080);letter-spacing:0px;">F2</div>
<div class="t" style="left:420.3px;top:1789.6px;font-size:34.8px;font-weight:bold;color:#0a8fe0;transform:scaleX(1.080);letter-spacing:0px;">Setting</div>
<div class="t" style="left:432.2px;top:1829.6px;font-size:34.8px;font-weight:bold;color:#0a8fe0;transform:scaleX(1.080);letter-spacing:0px;">E &amp; G</div>
<div class="t" style="left:444.1px;top:1869.6px;font-size:34.8px;font-weight:bold;color:#0a8fe0;transform:scaleX(1.080);letter-spacing:0px;">mod</div>
<div class="t" style="left:710.6px;top:1721.5px;font-size:29.0px;font-weight:bold;color:#111;transform:scaleX(1.080);letter-spacing:0px;">F3</div>
<div class="t" style="left:696.0px;top:1808.6px;font-size:34.8px;font-weight:bold;color:#0a8fe0;transform:scaleX(1.080);letter-spacing:0px;">See</div>
<div class="t" style="left:667.4px;top:1847.6px;font-size:34.8px;font-weight:bold;color:#0a8fe0;transform:scaleX(1.080);letter-spacing:0px;">results</div>
<div class="t" style="left:1029.6px;top:1721.5px;font-size:29.0px;font-weight:bold;color:#111;transform:scaleX(1.080);letter-spacing:0px;">F4</div>
<div class="t" style="left:993.4px;top:1808.6px;font-size:34.8px;font-weight:bold;color:#0a8fe0;transform:scaleX(1.080);letter-spacing:0px;">contin</div>
<div class="t" style="left:962.1px;top:1847.6px;font-size:34.8px;font-weight:bold;color:#0a8fe0;transform:scaleX(1.080);letter-spacing:0px;">CONFIRM</div>
<div class="t" style="left:1276.1px;top:1721.5px;font-size:29.0px;font-weight:bold;color:#111;transform:scaleX(1.080);letter-spacing:0px;">F6</div>
<div class="t" style="left:1251.3px;top:1829.6px;font-size:34.8px;font-weight:bold;color:#0a8fe0;transform:scaleX(1.080);letter-spacing:0px;">Save</div>
<div class="t" style="left:1594.1px;top:1721.5px;font-size:29.0px;font-weight:bold;color:#111;transform:scaleX(1.080);letter-spacing:0px;">F6</div>
<div class="t" style="left:1569.3px;top:1808.6px;font-size:34.8px;font-weight:bold;color:#0a8fe0;transform:scaleX(1.080);letter-spacing:0px;">Print</div>
<div class="t" style="left:1554.7px;top:1847.6px;font-size:34.8px;font-weight:bold;color:#0a8fe0;transform:scaleX(1.080);letter-spacing:0px;">Result</div>
<div class="t" style="left:1842.1px;top:1721.5px;font-size:29.0px;font-weight:bold;color:#111;transform:scaleX(1.080);letter-spacing:0px;">F7</div>
<div class="t" style="left:1805.4px;top:1808.6px;font-size:34.8px;font-weight:bold;color:#0a8fe0;transform:scaleX(1.080);letter-spacing:0px;">Signal</div>
<div class="t" style="left:1787.0px;top:1847.6px;font-size:34.8px;font-weight:bold;color:#0a8fe0;transform:scaleX(1.080);letter-spacing:0px;">analysis</div>
<div class="t" style="left:2093.1px;top:1721.5px;font-size:29.0px;font-weight:bold;color:#111;transform:scaleX(1.080);letter-spacing:0px;">F8</div>
<div class="t" style="left:2028.3px;top:1808.6px;font-size:34.8px;font-weight:bold;color:#0a8fe0;transform:scaleX(1.080);letter-spacing:0px;">Calculate</div>
<div class="t" style="left:2063.4px;top:1847.6px;font-size:34.8px;font-weight:bold;color:#0a8fe0;transform:scaleX(1.080);letter-spacing:0px;">again</div>
<div class="t" style="left:2343.1px;top:1721.5px;font-size:29.0px;font-weight:bold;color:#7a9aa4;transform:scaleX(1.080);letter-spacing:0px;">F9</div>
<div class="t" style="left:2292.3px;top:1808.6px;font-size:34.8px;font-weight:bold;color:#80c8ec;transform:scaleX(1.080);letter-spacing:0px;">No time</div>
<div class="t" style="left:2295.6px;top:1847.6px;font-size:34.8px;font-weight:bold;color:#80c8ec;transform:scaleX(1.080);letter-spacing:0px;">interval</div>
<div class="t" style="left:2582.5px;top:1721.5px;font-size:29.0px;font-weight:bold;color:#111;transform:scaleX(1.080);letter-spacing:0px;">F10</div>
<div class="t" style="left:2533.3px;top:1829.6px;font-size:34.8px;font-weight:bold;color:#0a8fe0;transform:scaleX(1.080);letter-spacing:0px;">Measure</div>
<div class="t" style="left:2831.0px;top:1721.5px;font-size:29.0px;font-weight:bold;color:#111;transform:scaleX(1.080);letter-spacing:0px;">F11</div>
<div class="t" style="left:2784.0px;top:1829.6px;font-size:34.8px;font-weight:bold;color:#0a8fe0;transform:scaleX(1.080);letter-spacing:0px;">Settings</div>
<div class="t" style="left:3079.5px;top:1721.5px;font-size:29.0px;font-weight:bold;color:#111;transform:scaleX(1.080);letter-spacing:0px;">F12</div>
<div class="t" style="left:3071.4px;top:1829.6px;font-size:34.8px;font-weight:bold;color:#0a8fe0;transform:scaleX(1.080);letter-spacing:0px;">Exit</div>
</body></html>
